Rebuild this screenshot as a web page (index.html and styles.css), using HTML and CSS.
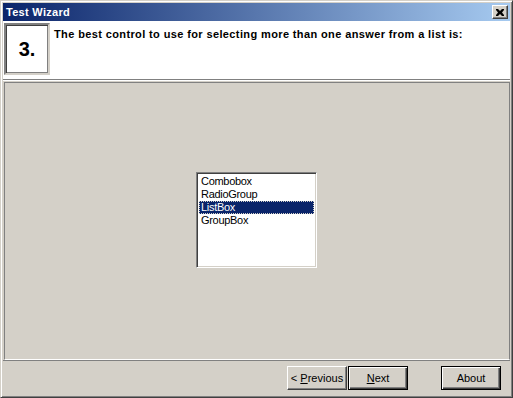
FILE: index.html
```html
<!DOCTYPE html>
<html>
<head>
<meta charset="utf-8">
<link rel="stylesheet" href="styles.css">
</head>
<body>
<div class="window">
  <div class="titlebar">
    <span class="title">Test Wizard</span>
    <span class="close"><svg width="8" height="7" viewBox="0 0 8 7"><path d="M0 0h2l2 2 2-2h2v1l-2 2.5 2 2.5v1h-2l-2-2-2 2h-2v-1l2-2.5-2-2.5z" fill="#000"/></svg></span>
  </div>
  <div class="header">
    <div class="num">3.</div>
    <div class="question">The best control to use for selecting more than one answer from a list is:</div>
  </div>
  <div class="panel">
    <div class="listbox">
      <div class="item">Combobox</div>
      <div class="item">RadioGroup</div>
      <div class="item selected">ListBox</div>
      <div class="item">GroupBox</div>
    </div>
  </div>
  <div class="buttons">
    <button class="btn">&lt; <u>P</u>revious</button>
    <button class="btn default"><u>N</u>ext</button>
    <button class="btn about">About</button>
  </div>
</div>
</body>
</html>
```
FILE: styles.css
```css
html, body {
  margin: 0;
  padding: 0;
  background: #d4d0c8;
}
body {
  font-family: "Liberation Sans", Arial, sans-serif;
  font-size: 11px;
}
.window {
  width: 513px;
  height: 398px;
  box-sizing: border-box;
  background: #d4d0c8;
  border-top: 1px solid #d4d0c8;
  border-left: 1px solid #d4d0c8;
  border-right: 1px solid #404040;
  border-bottom: 1px solid #404040;
  box-shadow: inset 1px 1px 0 #ffffff, inset -1px -1px 0 #808080;
  padding: 2px 2px 2px 2px;
  display: flex;
  flex-direction: column;
}
.titlebar {
  height: 18px;
  flex: none;
  background: linear-gradient(to right, #0a246a, #a6caf0);
  display: flex;
  align-items: center;
  justify-content: space-between;
  padding: 0 2px 0 3px;
}
.title {
  color: #fff;
  font-weight: bold;
  font-size: 11px;
  letter-spacing: 0.3px;
}
.close {
  width: 16px;
  height: 14px;
  box-sizing: border-box;
  background: #d4d0c8;
  border-top: 1px solid #fff;
  border-left: 1px solid #fff;
  border-right: 1px solid #404040;
  border-bottom: 1px solid #404040;
  box-shadow: inset -1px -1px 0 #808080;
  display: flex;
  align-items: center;
  justify-content: center;
}
.header {
  height: 58px;
  flex: none;
  background: #fff;
  display: flex;
  align-items: flex-start;
  border-bottom: 1px solid #808080;
  box-shadow: 0 1px 0 #ffffff;
}
.num {
  margin: 2px 0 0 1px;
  width: 46px;
  height: 52px;
  box-sizing: border-box;
  border-top: 2px solid #808080;
  border-left: 2px solid #808080;
  border-right: 2px solid #d4d0c8;
  border-bottom: 2px solid #d4d0c8;
  box-shadow: inset 1px 1px 0 #404040, inset -1px -1px 0 #808080;
  display: flex;
  align-items: center;
  justify-content: center;
  font-weight: bold;
  font-size: 20px;
}
.question {
  margin: 7px 0 0 4px;
  font-weight: bold;
  font-size: 11px;
  letter-spacing: 0.38px;
}
.panel {
  flex: 1;
  margin: 2px 0 0 1px;
  border-top: 1px solid #808080;
  border-left: 1px solid #808080;
  border-right: 1px solid #808080;
  border-bottom: 1px solid #ffffff;
  display: flex;
  align-items: center;
  justify-content: center;
}
.listbox {
  width: 121px;
  height: 96px;
  box-sizing: border-box;
  background: #fff;
  border-top: 1px solid #808080;
  border-left: 1px solid #808080;
  border-right: 1px solid #fff;
  border-bottom: 1px solid #fff;
  box-shadow: inset 1px 1px 0 #404040, inset -1px -1px 0 #d4d0c8;
  padding: 2px 2px;
  margin: -3px 0 0 -1px;
}
.item {
  height: 13px;
  line-height: 13px;
  padding-left: 2px;
  font-size: 11px;
  letter-spacing: -0.3px;
  color: #000;
}
.selected {
  background: #0a246a;
  color: #fff;
  outline: 1px dotted #d4d0c8;
  outline-offset: -1px;
}
.buttons {
  height: 34px;
  flex: none;
  display: flex;
  align-items: center;
  padding-left: 284px;
  border-top: 1px solid #808080;
}
.btn {
  font-family: "Liberation Sans", Arial, sans-serif;
  font-size: 11px;
  height: 24px;
  width: 60px;
  box-sizing: border-box;
  background: #d4d0c8;
  color: #000;
  padding: 0;
  margin: 0 1px 0 0;
  border-top: 1px solid #fff;
  border-left: 1px solid #fff;
  border-right: 1px solid #404040;
  border-bottom: 1px solid #404040;
  box-shadow: inset -1px -1px 0 #808080;
}
.btn u {
  text-decoration: underline;
}
.default {
  border: 1px solid #000;
  box-shadow: inset 1px 1px 0 #fff, inset -1px -1px 0 #404040, inset -2px -2px 0 #808080;
}
.about {
  margin-left: 32px;
  border: 1px solid #000;
  box-shadow: inset 1px 1px 0 #fff, inset -1px -1px 0 #404040, inset -2px -2px 0 #808080;
}
```
